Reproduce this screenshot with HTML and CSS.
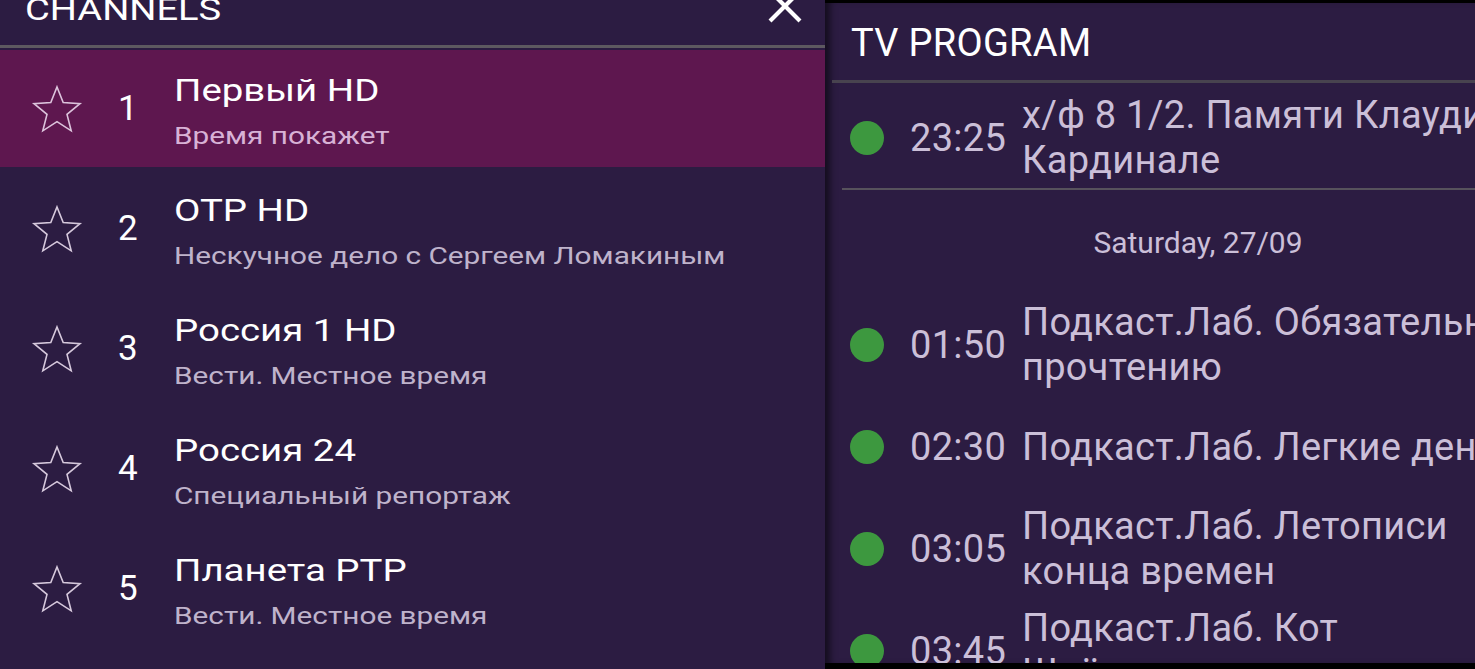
FILE: index.html
```html
<!DOCTYPE html>
<html lang="ru">
<head>
<meta charset="utf-8">
<title>Channels</title>
<link rel="stylesheet" href="styles.css">
</head>
<body>
<div class="screen">
  <section class="channels">
    <header class="ch-header">
      <h1 class="ch-title">CHANNELS</h1>
      <button class="close" aria-label="close">
        <svg width="36" height="36" viewBox="0 0 36 36"><path d="M3 3 L33 33 M33 3 L3 33" stroke="#ffffff" stroke-width="4.2" stroke-linecap="butt" fill="none"/></svg>
      </button>
    </header>
    <ul class="ch-list">
      <li class="ch-row selected">
        <span class="star"><svg width="52" height="50" viewBox="0 0 52 50"><path d="M26 3 L32.2 18.6 L49 19.6 L36 30.4 L40.2 46.8 L26 37.6 L11.8 46.8 L16 30.4 L3 19.6 L19.8 18.6 Z" fill="none" stroke="#dcc3dc" stroke-width="1.6" stroke-linejoin="miter"/></svg></span>
        <span class="num">1</span>
        <span class="ch-text"><span class="ch-name">Первый HD</span><span class="ch-show">Время покажет</span></span>
      </li>
      <li class="ch-row">
        <span class="star"><svg width="52" height="50" viewBox="0 0 52 50"><path d="M26 3 L32.2 18.6 L49 19.6 L36 30.4 L40.2 46.8 L26 37.6 L11.8 46.8 L16 30.4 L3 19.6 L19.8 18.6 Z" fill="none" stroke="#d6c8dc" stroke-width="1.6" stroke-linejoin="miter"/></svg></span>
        <span class="num">2</span>
        <span class="ch-text"><span class="ch-name">ОТР HD</span><span class="ch-show">Нескучное дело с Сергеем Ломакиным</span></span>
      </li>
      <li class="ch-row">
        <span class="star"><svg width="52" height="50" viewBox="0 0 52 50"><path d="M26 3 L32.2 18.6 L49 19.6 L36 30.4 L40.2 46.8 L26 37.6 L11.8 46.8 L16 30.4 L3 19.6 L19.8 18.6 Z" fill="none" stroke="#d6c8dc" stroke-width="1.6" stroke-linejoin="miter"/></svg></span>
        <span class="num">3</span>
        <span class="ch-text"><span class="ch-name">Россия 1 HD</span><span class="ch-show">Вести. Местное время</span></span>
      </li>
      <li class="ch-row">
        <span class="star"><svg width="52" height="50" viewBox="0 0 52 50"><path d="M26 3 L32.2 18.6 L49 19.6 L36 30.4 L40.2 46.8 L26 37.6 L11.8 46.8 L16 30.4 L3 19.6 L19.8 18.6 Z" fill="none" stroke="#d6c8dc" stroke-width="1.6" stroke-linejoin="miter"/></svg></span>
        <span class="num">4</span>
        <span class="ch-text"><span class="ch-name">Россия 24</span><span class="ch-show">Специальный репортаж</span></span>
      </li>
      <li class="ch-row">
        <span class="star"><svg width="52" height="50" viewBox="0 0 52 50"><path d="M26 3 L32.2 18.6 L49 19.6 L36 30.4 L40.2 46.8 L26 37.6 L11.8 46.8 L16 30.4 L3 19.6 L19.8 18.6 Z" fill="none" stroke="#d6c8dc" stroke-width="1.6" stroke-linejoin="miter"/></svg></span>
        <span class="num">5</span>
        <span class="ch-text"><span class="ch-name">Планета РТР</span><span class="ch-show">Вести. Местное время</span></span>
      </li>
    </ul>
  </section>
  <section class="program">
    <header class="pg-header">
      <h2 class="pg-title">TV PROGRAM</h2>
    </header>
    <div class="pg-list">
      <div class="pg-item current">
        <span class="dot"></span>
        <span class="time">23:25</span>
        <span class="pg-name">х/ф 8 1/2. Памяти Клаудии<br>Кардинале</span>
      </div>
      <div class="pg-date">Saturday, 27/09</div>
      <div class="pg-item">
        <span class="dot"></span>
        <span class="time">01:50</span>
        <span class="pg-name">Подкаст.Лаб. Обязательно к<br>прочтению</span>
      </div>
      <div class="pg-item">
        <span class="dot"></span>
        <span class="time">02:30</span>
        <span class="pg-name">Подкаст.Лаб. Легкие деньги</span>
      </div>
      <div class="pg-item">
        <span class="dot"></span>
        <span class="time">03:05</span>
        <span class="pg-name">Подкаст.Лаб. Летописи<br>конца времен</span>
      </div>
      <div class="pg-item">
        <span class="dot"></span>
        <span class="time">03:45</span>
        <span class="pg-name">Подкаст.Лаб. Кот<br>Шрёдингера</span>
      </div>
    </div>
  </section>
</div>
</body>
</html>
```

FILE: styles.css
```css
* { box-sizing: border-box; }
html, body {
  margin: 0;
  padding: 0;
  background: #000;
  width: 1475px;
  height: 669px;
  overflow: hidden;
  font-family: Roboto, "Noto Sans", "DejaVu Sans", sans-serif;
}
.screen {
  display: flex;
  width: 1475px;
  height: 669px;
  overflow: hidden;
}
.channels {
  width: 825px;
  height: 669px;
  background: #2c1c42;
  display: flex;
  flex-direction: column;
  flex: none;
}
.ch-header {
  height: 48px;
  border-bottom: 3px solid #5d5960;
  display: flex;
  align-items: flex-start;
  justify-content: space-between;
  padding: 0 22px 0 25px;
  overflow: hidden;
  flex: none;
}
.ch-title {
  margin: -10px 0 0 0;
  font-size: 32px;
  font-weight: 400;
  line-height: 38px;
  color: #ffffff;
  transform: scaleX(1.19);
  transform-origin: left center;
}
.close {
  margin: -12px 0 0 0;
  padding: 0;
  border: 0;
  background: none;
  width: 36px;
  height: 36px;
  display: block;
}
.close svg { display: block; }
.ch-list {
  list-style: none;
  margin: 0;
  padding: 2px 0 0 0;
  display: flex;
  flex-direction: column;
  gap: 3px;
}
.ch-row {
  height: 117px;
  display: flex;
  align-items: center;
  padding-left: 31px;
}
.ch-row.selected { background: #5e174f; }
.star { width: 52px; height: 50px; flex: none; display: block; }
.star svg { display: block; }
.num {
  width: 91px;
  padding-left: 35px;
  font-size: 35px;
  color: #ffffff;
  flex: none;
}
.ch-text {
  display: flex;
  flex-direction: column;
  padding-top: 3px;
  transform: scaleX(1.2);
  transform-origin: left center;
  white-space: nowrap;
}
.ch-name {
  font-size: 32px;
  line-height: 44px;
  color: #ffffff;
}
.ch-show {
  margin-top: 7px;
  font-size: 24.8px;
  line-height: 34px;
  color: #bfb3cb;
}
.selected .ch-show { color: #d8b2d6; }

.program {
  flex: none;
  width: 729px;
  height: 660px;
  margin-top: 3px;
  background: #2c1c42;
  box-shadow: inset 9px 0 7px -4px rgba(0,0,0,0.55);
  overflow: hidden;
  display: flex;
  flex-direction: column;
}
.pg-header {
  height: 80px;
  border-bottom: 3px solid #48434f;
  margin-left: 7px;
  padding-left: 19px;
  flex: none;
}
.pg-title {
  margin: 0;
  padding-top: 18px;
  font-size: 38px;
  font-weight: 400;
  line-height: 44px;
  letter-spacing: 0.3px;
  color: #ffffff;
  white-space: nowrap;
}
.pg-list {
  display: flex;
  flex-direction: column;
  padding-left: 17px;
}
.pg-item {
  display: flex;
  align-items: center;
  height: 102px;
  padding-left: 8px;
  white-space: nowrap;
  flex: none;
}
.pg-item.current {
  height: 107px;
  padding-top: 5px;
  border-bottom: 2px solid #57525c;
}
.dot {
  width: 34px;
  height: 34px;
  border-radius: 50%;
  background: #3d983f;
  flex: none;
}
.time {
  margin-left: 26px;
  width: 112px;
  font-size: 38px;
  letter-spacing: 0.3px;
  color: #cbbfd8;
  flex: none;
}
.pg-name {
  font-size: 38px;
  line-height: 45px;
  letter-spacing: 0.3px;
  color: #cbbfd8;
}
.pg-date {
  height: 104px;
  padding-top: 35px;
  text-align: center;
  font-size: 30px;
  line-height: 36px;
  color: #cbbfd8;
  flex: none;
}
```
